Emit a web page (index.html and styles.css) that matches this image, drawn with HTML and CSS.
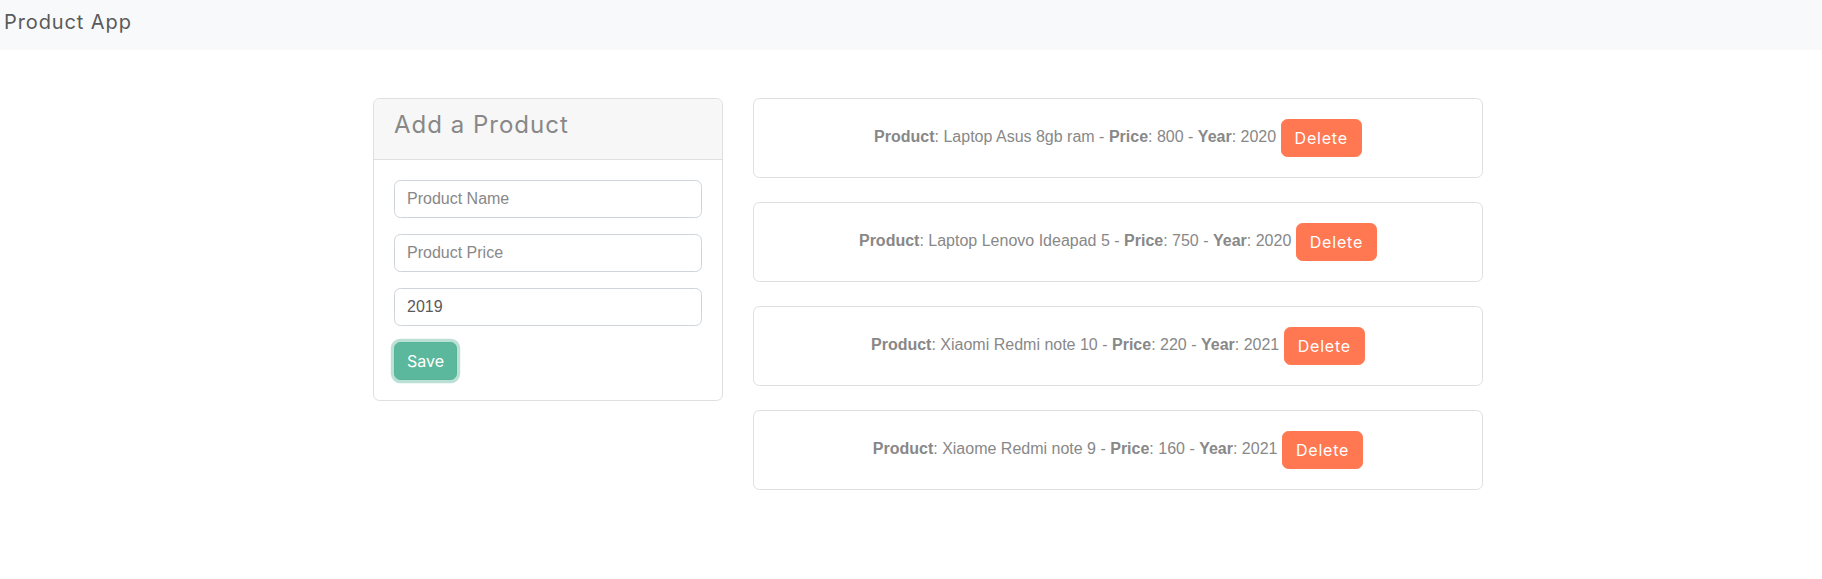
FILE: index.html
```html
<!DOCTYPE html>
<html lang="en">
<head>
<meta charset="utf-8">
<title>Product App</title>
<link rel="stylesheet" href="styles.css">
</head>
<body>
<nav class="navbar">
  <span class="brand">Product App</span>
</nav>
<main class="main">
  <section class="card form-card">
    <div class="card-header">
      <h4 class="card-title">Add a Product</h4>
    </div>
    <form class="card-body">
      <div class="form-group"><input class="form-control" type="text" placeholder="Product Name"></div>
      <div class="form-group"><input class="form-control" type="text" placeholder="Product Price"></div>
      <div class="form-group"><input class="form-control" type="text" value="2019"></div>
      <button type="button" class="btn btn-save">Save</button>
    </form>
  </section>
  <section class="list">
    <div class="card item">
      <div class="item-body"><b>Product</b>: Laptop Asus 8gb ram - <b>Price</b>: 800 - <b>Year</b>: 2020 <button type="button" class="btn btn-delete">Delete</button></div>
    </div>
    <div class="card item">
      <div class="item-body"><b>Product</b>: Laptop Lenovo Ideapad 5 - <b>Price</b>: 750 - <b>Year</b>: 2020 <button type="button" class="btn btn-delete">Delete</button></div>
    </div>
    <div class="card item">
      <div class="item-body"><b>Product</b>: Xiaomi Redmi note 10 - <b>Price</b>: 220 - <b>Year</b>: 2021 <button type="button" class="btn btn-delete">Delete</button></div>
    </div>
    <div class="card item">
      <div class="item-body"><b>Product</b>: Xiaome Redmi note 9 - <b>Price</b>: 160 - <b>Year</b>: 2021 <button type="button" class="btn btn-delete">Delete</button></div>
    </div>
  </section>
</main>
</body>
</html>
```

FILE: styles.css
```css
* { box-sizing: border-box; }
html, body { margin: 0; padding: 0; }
body {
  font-family: "Liberation Sans", Arial, sans-serif;
  font-size: 16px;
  line-height: 1.5;
  color: #888888;
  background: #ffffff;
}
.navbar {
  height: 50px;
  background: #f8f9fa;
  display: flex;
  align-items: center;
  padding: 0 4px;
}
.brand {
  font-family: "Inter", "Open Sans", sans-serif;
  font-size: 20px;
  letter-spacing: 0.9px;
  font-weight: 400;
  color: #5a5a5a;
  line-height: 30px;
  margin-top: -6px;
}
.main {
  width: 1110px;
  margin: 48px 0 0 373px;
  display: grid;
  grid-template-columns: 350px 730px;
  column-gap: 30px;
  align-items: start;
}
.card {
  border: 1px solid #dfdfdf;
  border-radius: 6.4px;
  background: #ffffff;
  overflow: hidden;
}
.card-header {
  background: #f7f7f7;
  border-bottom: 1px solid #dfdfdf;
  padding: 12px 20px;
}
.card-title {
  margin: 0 0 8px;
  font-family: "Inter", "Open Sans", sans-serif;
  font-size: 24px;
  font-weight: 400;
  letter-spacing: 1px;
  line-height: 28px;
  color: #888888;
}
.card-body {
  padding: 20px;
  margin: 0;
}
.form-group { margin-bottom: 16px; }
.form-control {
  display: block;
  width: 100%;
  height: 38px;
  padding: 6px 12px;
  font-family: "Liberation Sans", Arial, sans-serif;
  font-size: 16px;
  line-height: 1.5;
  color: #5a5a5a;
  background: #ffffff;
  border: 1px solid #ced4da;
  border-radius: 6.4px;
  outline: none;
}
.form-control::placeholder { color: #888888; opacity: 1; }
.btn {
  display: inline-block;
  font-family: "Inter", "Open Sans", sans-serif;
  font-size: 16px;
  font-weight: 400;
  line-height: 24px;
  padding: 6px 12px;
  border: 1px solid transparent;
  border-radius: 6.4px;
  color: #ffffff;
  cursor: pointer;
  vertical-align: middle;
}
.btn-save {
  background: #5cb89c;
  border-color: #56b497;
  box-shadow: 0 0 0 3.2px rgba(120, 194, 173, 0.5);
}
.btn-delete {
  background: #ff7851;
  border-color: #ff7851;
  letter-spacing: 0.8px;
  padding: 6px 13px;
}
.list {
  display: flex;
  flex-direction: column;
  gap: 24px;
}
.item-body {
  padding: 20px;
  text-align: center;
}
.item-body b { font-weight: 700; }
```
